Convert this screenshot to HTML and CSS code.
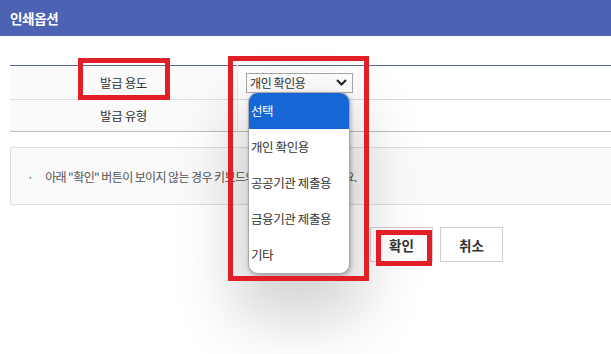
FILE: index.html
```html
<!DOCTYPE html>
<html>
<head>
  <title>인쇄옵션</title>
  <meta charset="UTF-8" />
  <link rel="stylesheet" href="styles.css">
</head>
<body>
  <div class="header">
    <h1>인쇄옵션</h1>
  </div>

  <div class="content">
    <!-- 옵션 테이블 -->
    <table class="opt-table">
      <tr class="row-use">
        <th>
          발급 용도
          <i class="mark mark-label"></i>
        </th>
        <td class="select-cell">
          <div class="fake-select">
            <span>개인 확인용</span>
            <svg width="11" height="7" viewBox="0 0 11 7"><polyline points="1,1 5.5,5.5 10,1" fill="none" stroke="#222" stroke-width="2"/></svg>
          </div>
          <ul class="select-list">
            <li class="active">선택</li>
            <li>개인 확인용</li>
            <li>공공기관 제출용</li>
            <li>금융기관 제출용</li>
            <li>기타</li>
          </ul>
          <i class="mark mark-select"></i>
        </td>
      </tr>
      <tr class="row-type">
        <th>발급 유형</th>
        <td></td>
      </tr>
    </table>

    <!-- 안내 -->
    <div class="notice">
      <span class="dot">·</span>
      아래 "확인" 버튼이 보이지 않는 경우 키보드의 방향키를 이용하세요.
    </div>

    <div class="actions">
      <button class="btn btn-ok">확인<i class="mark mark-ok"></i></button>
      <button class="btn">취소</button>
    </div>
  </div>
</body>
</html>
```

FILE: styles.css
```css
html, body {
  height: 100%;
}

body {
  margin: 0;
  min-height: 354px;
  font-family: "Noto Sans CJK KR", "Noto Sans", sans-serif;
  color: #333;
  background: #fff;
}

.header {
  background: #4d62b3;
  height: 36px;
  padding-left: 10px;
  display: flex;
  align-items: center;
}

.header h1 {
  margin: 0;
  font-size: 13.5px;
  font-weight: 700;
  color: #fff;
  letter-spacing: -0.3px;
}

.content {
  padding: 29px 0 0 10px;
}

.opt-table {
  width: 100%;
  border-collapse: collapse;
  border-top: 1px solid #56659b;
  font-size: 12.5px;
  letter-spacing: -0.4px;
}

.opt-table th {
  position: relative;
  width: 227px;
  padding: 0;
  font-weight: 400;
  background: #fafafa;
  border-right: 1px solid #e6e6e6;
  text-align: center;
}

.opt-table td {
  padding: 0 0 0 8px;
}

.row-use th,
.row-use td {
  height: 33px;
  border-bottom: 1px solid #dedede;
}

.row-type th,
.row-type td {
  height: 31px;
  border-bottom: 1px solid #bdbdbd;
}

.select-cell {
  position: relative;
}

.fake-select {
  width: 97px;
  height: 18px;
  border: 1px solid #a9a9a9;
  display: flex;
  align-items: center;
  justify-content: space-between;
  padding: 0 5px 0 3px;
  font-size: 12px;
  line-height: 18px;
}

.fake-select svg {
  display: block;
}

.select-list {
  position: absolute;
  z-index: 5;
  top: 26px;
  left: 10px;
  width: 100px;
  margin: 0;
  padding: 0;
  list-style: none;
  background: #fff;
  border: 1px solid #a8a8a8;
  border-radius: 10px;
  overflow: hidden;
  box-shadow: 1px 2px 4px rgba(0, 0, 0, 0.25), 0 30px 60px 16px rgba(0, 0, 0, 0.17);
}

.select-list li {
  height: 36px;
  line-height: 36px;
  padding-left: 2px;
  font-size: 12.5px;
  color: #333;
  white-space: nowrap;
}

.select-list li.active {
  background: #1766d6;
  color: #fff;
}

.notice {
  margin-top: 15px;
  height: 56px;
  border: 1px solid #dedede;
  border-right: none;
  background: #fafafa;
  display: flex;
  align-items: center;
  padding-left: 16px;
  font-size: 12px;
  letter-spacing: -0.6px;
  color: #555;
  white-space: nowrap;
}

.notice .dot {
  margin-right: 12px;
}

.actions {
  margin-top: 22px;
  padding-left: 360px;
  display: flex;
  gap: 7px;
}

.btn {
  position: relative;
  width: 63px;
  height: 35px;
  background: #fff;
  border: 1px solid #cfcfcf;
  font-family: inherit;
  font-size: 13.5px;
  font-weight: 700;
  color: #333;
  padding: 0;
}

/* 빨간 표시 박스 */
.mark {
  position: absolute;
  z-index: 6;
  box-sizing: border-box;
  border: 5px solid #e21f26;
  pointer-events: none;
}

.mark-label {
  left: 68px;
  top: -8px;
  width: 92px;
  height: 42px;
}

.mark-select {
  left: -10px;
  top: -10px;
  width: 141px;
  height: 225px;
}

.mark-ok {
  left: 5px;
  top: 2px;
  width: 56px;
  height: 36px;
}
```
